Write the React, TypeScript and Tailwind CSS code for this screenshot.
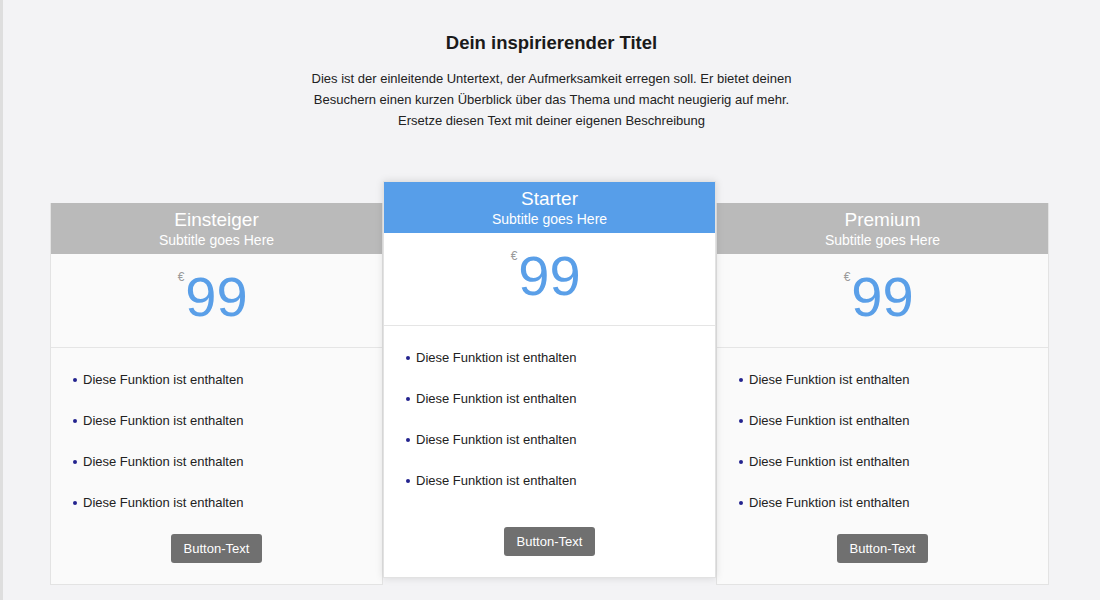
import React from "react";

interface Plan {
  name: string;
  subtitle: string;
  price: string;
  featured?: boolean;
}

const PLANS: Plan[] = [
  { name: "Einsteiger", subtitle: "Subtitle goes Here", price: "99" },
  { name: "Starter", subtitle: "Subtitle goes Here", price: "99", featured: true },
  { name: "Premium", subtitle: "Subtitle goes Here", price: "99" },
];

const FEATURES = [
  "Diese Funktion ist enthalten",
  "Diese Funktion ist enthalten",
  "Diese Funktion ist enthalten",
  "Diese Funktion ist enthalten",
];

const PlanCard: React.FC<{ plan: Plan }> = ({ plan }) => {
  const featured = !!plan.featured;
  return (
    <div
      className={
        featured
          ? "relative z-10 w-[333px] flex flex-col bg-white border border-[#e2e2e2] shadow-[0_0_8px_rgba(0,0,0,0.12)]"
          : "w-[333px] mt-[22px] flex flex-col bg-[#fafafa] border-x border-b border-[#e3e3e3]"
      }
    >
      {/* Header */}
      <div
        className={`h-[51px] py-[5px] text-center text-white ${
          featured ? "bg-[#579ee9]" : "bg-[#bababa]"
        }`}
      >
        <div className="text-[19px] leading-[23px]">{plan.name}</div>
        <div className="text-[14px] leading-[18px]">{plan.subtitle}</div>
      </div>

      {/* Price */}
      <div
        className={`flex justify-center border-b border-[#e5e5e5] pt-[15px] ${
          featured ? "h-[93px]" : "h-[94px]"
        }`}
      >
        <div className="relative">
          <span className="absolute right-full top-[2px] mr-[1px] text-[12px] leading-[12px] text-[#9a9a9a]">
            €
          </span>
          <span className="block text-[56px] leading-[56px] text-[#5a9fe8]">{plan.price}</span>
        </div>
      </div>

      {/* Features */}
      <ul className="pt-[11px] pl-[22px]">
        {FEATURES.map((f, i) => (
          <li key={i} className="h-[41px] flex items-center text-[13px] text-[#222]">
            <span className="w-[4px] h-[4px] rounded-full bg-[#23238e] mr-[6px]" />
            {f}
          </li>
        ))}
      </ul>

      <div
        className={`flex justify-center ${
          featured ? "pt-[26px] pb-[21px]" : "pt-[11px] pb-[21px]"
        }`}
      >
        <button
          type="button"
          className="w-[91px] h-[29px] rounded-[3px] bg-[#707070] text-white text-[13px] leading-[29px]"
        >
          Button-Text
        </button>
      </div>
    </div>
  );
};

const App: React.FC = () => {
  return (
    <div
      className="min-h-screen bg-[#f3f3f5] border-l-[3px] border-[#dedede]"
      style={{ fontFamily: '"Liberation Sans", Arial, sans-serif' }}
    >
      {/* Intro */}
      <div className="pt-[31px] flex flex-col items-center text-center">
        <h1 className="text-[18.5px] leading-[24px] font-bold text-[#1a1a1a]">
          Dein inspirierender Titel
        </h1>
        <p className="mt-[13px] w-[500px] text-[13px] leading-[21px] text-[#222]">
          Dies ist der einleitende Untertext, der Aufmerksamkeit erregen soll. Er bietet deinen
          Besuchern einen kurzen Überblick über das Thema und macht neugierig auf mehr.
          <br />
          Ersetze diesen Text mit deiner eigenen Beschreibung
        </p>
      </div>

      {/* Pricing cards */}
      <div className="mt-[50px] pl-[47px] flex items-start">
        {PLANS.map((p) => (
          <PlanCard key={p.name} plan={p} />
        ))}
      </div>
    </div>
  );
};

export default App;
